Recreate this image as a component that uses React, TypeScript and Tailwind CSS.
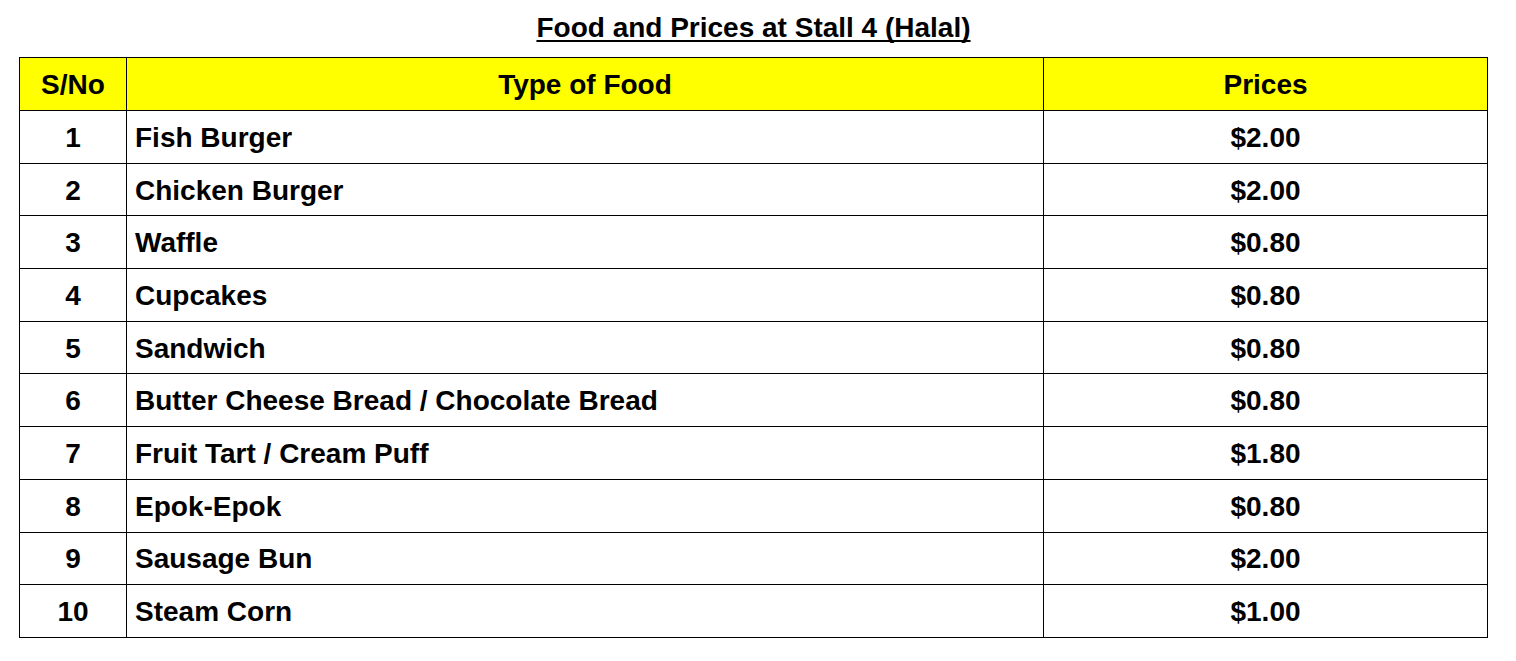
import React from "react";

const rows: [string, string, string][] = [
  ["1", "Fish Burger", "$2.00"],
  ["2", "Chicken Burger", "$2.00"],
  ["3", "Waffle", "$0.80"],
  ["4", "Cupcakes", "$0.80"],
  ["5", "Sandwich", "$0.80"],
  ["6", "Butter Cheese Bread / Chocolate Bread", "$0.80"],
  ["7", "Fruit Tart / Cream Puff", "$1.80"],
  ["8", "Epok-Epok", "$0.80"],
  ["9", "Sausage Bun", "$2.00"],
  ["10", "Steam Corn", "$1.00"],
];

export default function App() {
  return (
    <div
      className="w-[1516px] h-[661px] bg-white text-black"
      style={{ fontFamily: '"Liberation Sans", Arial, sans-serif' }}
    >
      <div className="pl-[19px] pt-[12px]">
        <div className="w-[1469px] text-center text-[28px] font-bold underline leading-[32px] underline-offset-[3px] [text-decoration-skip-ink:none]">
          Food and Prices at Stall 4 (Halal)
        </div>
        <table className="mt-[13px] border-collapse table-fixed w-[1468px] text-[28px] font-bold">
          <colgroup>
            <col className="w-[107px]" />
            <col className="w-[917px]" />
            <col className="w-[444px]" />
          </colgroup>
          <thead>
            <tr className="bg-[#ffff00] h-[53px]">
              <th className="border border-black text-center px-0 pt-[2px] pb-0">S/No</th>
              <th className="border border-black text-center px-0 pt-[2px] pb-0">Type of Food</th>
              <th className="border border-black text-center px-0 pt-[2px] pb-0">Prices</th>
            </tr>
          </thead>
          <tbody>
            {rows.map(([n, food, price]) => (
              <tr key={n} className="h-[52.7px]">
                <td className="border border-black text-center px-0 pt-[2px] pb-0">{n}</td>
                <td className="border border-black text-left pl-[8px] pr-0 pt-[2px] pb-0">{food}</td>
                <td className="border border-black text-center px-0 pt-[2px] pb-0">{price}</td>
              </tr>
            ))}
          </tbody>
        </table>
      </div>
    </div>
  );
}
